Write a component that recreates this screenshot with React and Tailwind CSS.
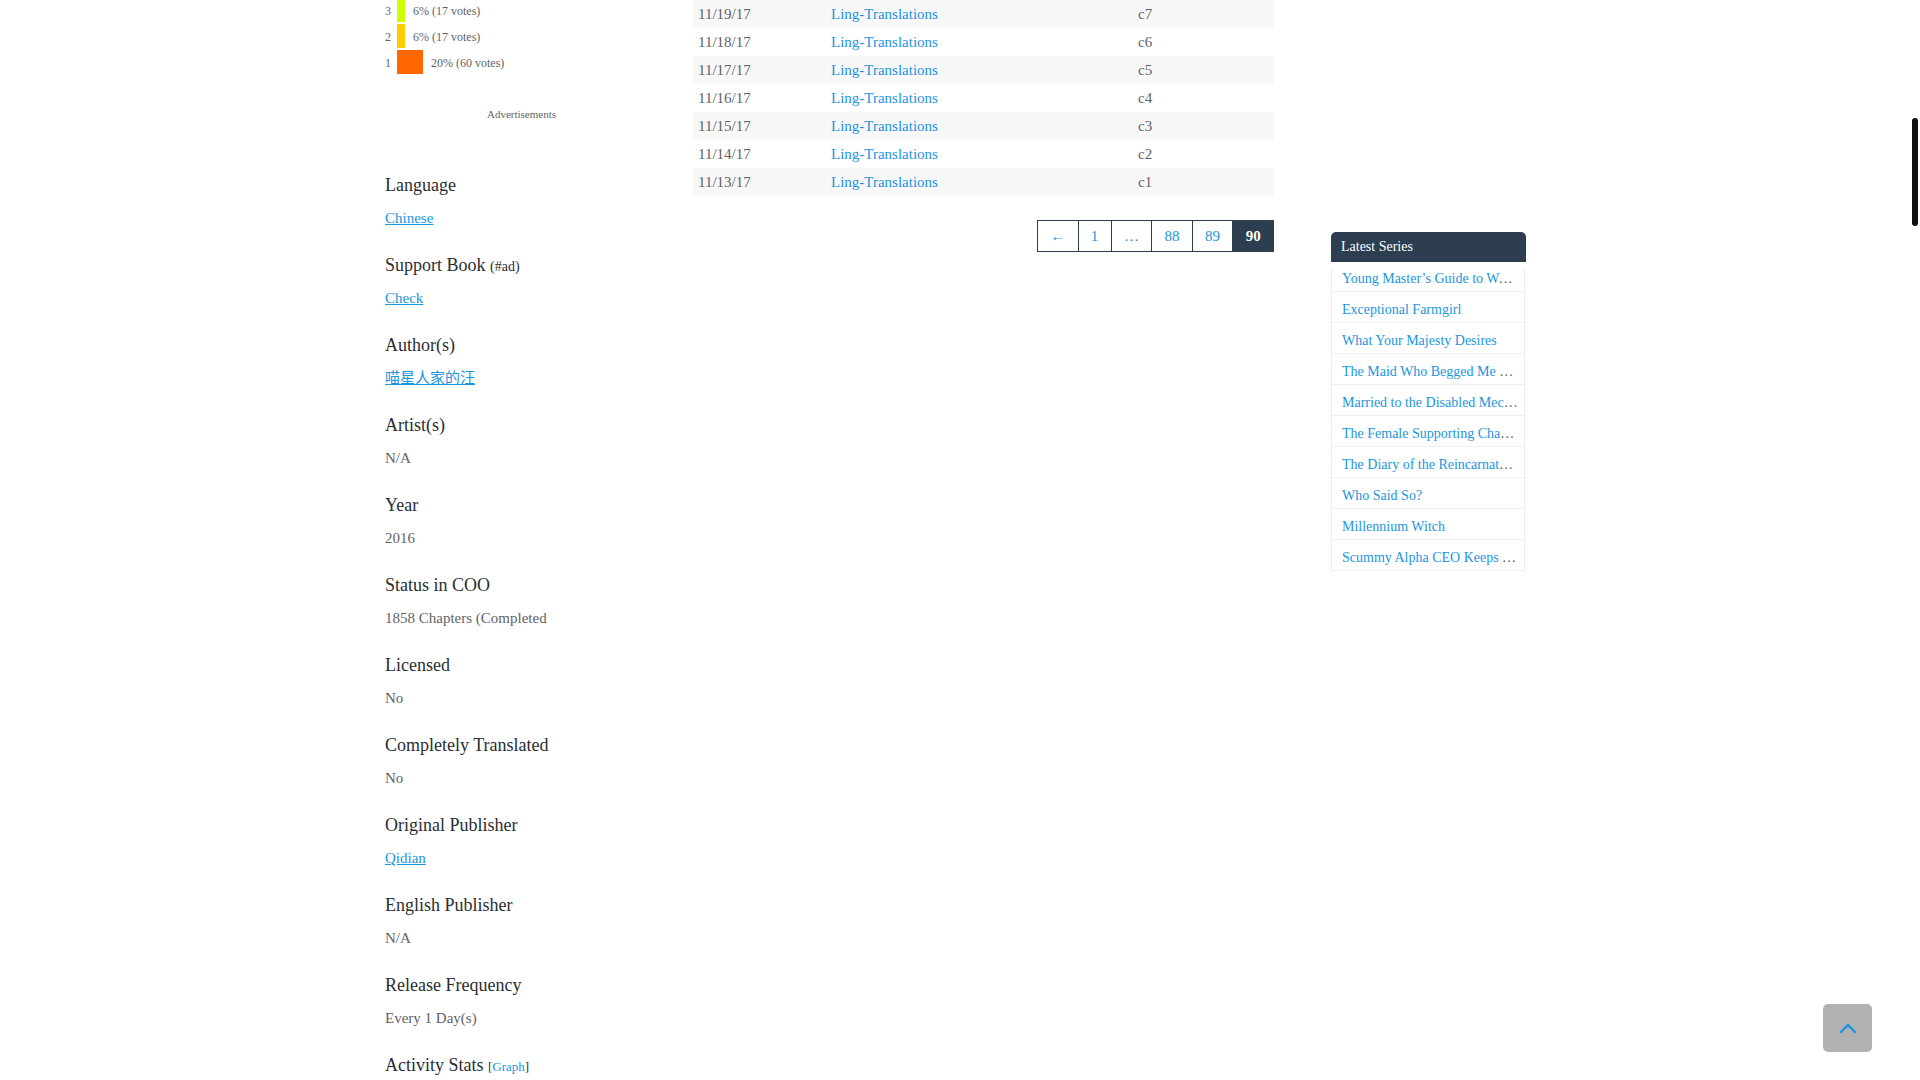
const votes = [
  { score: 3, width: "w-2", color: "bg-[#ccff00]", label: "6% (17 votes)" },
  { score: 2, width: "w-2", color: "bg-[#ffcc00]", label: "6% (17 votes)" },
  { score: 1, width: "w-[26px]", color: "bg-[#ff6600]", label: "20% (60 votes)" },
];

const details = [
  { title: "Language", value: "Chinese", link: true },
  { title: "Support Book", note: "(#ad)", value: "Check", link: true },
  { title: "Author(s)", value: "喵星人家的汪", link: true },
  { title: "Artist(s)", value: "N/A" },
  { title: "Year", value: "2016" },
  { title: "Status in COO", value: "1858 Chapters (Completed" },
  { title: "Licensed", value: "No" },
  { title: "Completely Translated", value: "No" },
  { title: "Original Publisher", value: "Qidian", link: true },
  { title: "English Publisher", value: "N/A" },
  { title: "Release Frequency", value: "Every 1 Day(s)" },
];

const releases = [
  ["11/19/17", "c7"],
  ["11/18/17", "c6"],
  ["11/17/17", "c5"],
  ["11/16/17", "c4"],
  ["11/15/17", "c3"],
  ["11/14/17", "c2"],
  ["11/13/17", "c1"],
];

const latest = [
  "Young Master’s Guide to Worldly Wins",
  "Exceptional Farmgirl",
  "What Your Majesty Desires",
  "The Maid Who Begged Me Many Times",
  "Married to the Disabled Mecha Maker",
  "The Female Supporting Character",
  "The Diary of the Reincarnated Villain",
  "Who Said So?",
  "Millennium Witch",
  "Scummy Alpha CEO Keeps Wooing Me",
];

function Votes() {
  return (
    <ul className="-mt-0.5 flex flex-col gap-0.5 text-[12px]">
      {votes.map((v) => (
        <li key={v.score} className="flex h-6 items-center">
          <span className="w-3 pt-0.5">{v.score}</span>
          <span className={`mr-2 h-6 ${v.width} ${v.color}`} />
          <span className="pt-0.5">{v.label}</span>
        </li>
      ))}
    </ul>
  );
}

function Details() {
  return (
    <div className="mt-[51px]">
      {details.map((d) => (
        <section key={d.title} className="h-20">
          <h2 className="text-[18px] leading-6 text-[#292e33]">
            {d.title} {d.note && <span className="text-[14px] leading-none">{d.note}</span>}
          </h2>
          <p className="mt-[9px] leading-6">
            {d.link ? (
              <a href="#" className="text-[#1b95e0] underline">
                {d.value}
              </a>
            ) : (
              d.value
            )}
          </p>
        </section>
      ))}
      <h2 className="text-[18px] leading-6 text-[#292e33]">
        Activity Stats{" "}
        <span className="text-[13px] leading-none">
          [
          <a href="#" className="text-[#1b95e0]">
            Graph
          </a>
          ]
        </span>
      </h2>
    </div>
  );
}

function Releases() {
  return (
    <table className="w-full table-fixed border-collapse">
      <colgroup>
        <col className="w-[133px]" />
        <col className="w-[307px]" />
        <col />
      </colgroup>
      <tbody>
        {releases.map(([date, chapter]) => (
          <tr key={date} className="h-7 odd:bg-[#f8f8f8]">
            <td className="px-[5px]">{date}</td>
            <td className="px-[5px]">
              <a href="#" className="text-[#1b95e0]">
                Ling-Translations
              </a>
            </td>
            <td className="px-[5px]">{chapter}</td>
          </tr>
        ))}
      </tbody>
    </table>
  );
}

function Pagination() {
  const cell = "flex-auto border-l border-[#2c3e50] px-3 leading-[30px] text-[#1b95e0]";
  return (
    <nav aria-label="Pages" className="mt-6 flex justify-end">
      <div className="flex w-[237px] border-y border-r border-[#2c3e50] text-center">
        <a href="#" className={cell} aria-label="Previous">
          ←
        </a>
        <a href="#" className={cell}>
          1
        </a>
        <span className={cell}>…</span>
        <a href="#" className={cell}>
          88
        </a>
        <a href="#" className={cell}>
          89
        </a>
        <span
          aria-current="page"
          className="flex-auto border-l border-[#2c3e50] bg-[#2c3e50] px-3 font-bold leading-[30px] text-white"
        >
          90
        </span>
      </div>
    </nav>
  );
}

function LatestSeries() {
  return (
    <aside className="mt-[232px] w-[195px] shrink-0 text-[14px]">
      <h2 className="rounded-t-[5px] bg-[#2c3e50] px-2.5 leading-[30px] text-white">Latest Series</h2>
      <ul className="mr-px mt-[5px] border-x border-[#eeeeee]">
        {latest.map((name) => (
          <li
            key={name}
            className="truncate border-b border-[#eeeeee] pl-2.5 pr-1.5 pt-1.5 leading-6 first:pt-0"
          >
            <a href="#" className="text-[#1b95e0]">
              {name}
            </a>
          </li>
        ))}
      </ul>
    </aside>
  );
}

export default function App() {
  return (
    <div className="h-screen overflow-hidden bg-white font-['Liberation_Serif','Noto_Sans_CJK_SC',serif] text-[15px] text-[#5f6368]">
      <main className="mx-auto flex w-full max-w-[1150px] pr-[9px]">
        <div className="w-[273px] shrink-0">
          <Votes />
          <p className="mt-8 text-center text-[11px] leading-4">Advertisements</p>
          <Details />
        </div>
        <div className="ml-[35px] mr-[57px] min-w-0 flex-1">
          <Releases />
          <Pagination />
        </div>
        <LatestSeries />
      </main>
      <div className="fixed right-0.5 top-[118px] h-[108px] w-1.5 rounded-full bg-[#111111]" />
      <button
        type="button"
        aria-label="Back to top"
        className="fixed bottom-7 right-12 flex h-12 w-[49px] items-center justify-center rounded-[5px] bg-[#b2b2b2] text-[#1b95e0]"
      >
        <svg width="18" height="12" viewBox="0 0 18 12" fill="none" stroke="currentColor" strokeWidth="2.4">
          <path d="M2 10 9 3 16 10" strokeLinecap="round" />
        </svg>
      </button>
    </div>
  );
}
